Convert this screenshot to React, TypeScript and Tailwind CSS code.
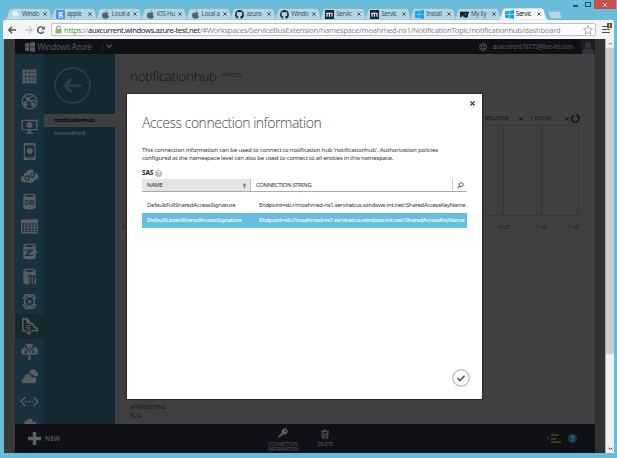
import React from "react";

type Kind = "page" | "google" | "apple" | "github" | "m" | "win" | "mtv";

const tabs: { kind: Kind; label: string; active?: boolean }[] = [
  { kind: "page", label: "Windo" },
  { kind: "google", label: "apple" },
  { kind: "apple", label: "Local a" },
  { kind: "apple", label: "iOS Hu" },
  { kind: "apple", label: "Local a" },
  { kind: "github", label: "azure-" },
  { kind: "github", label: "Windo" },
  { kind: "m", label: "Servic" },
  { kind: "m", label: "Servic" },
  { kind: "win", label: "Install" },
  { kind: "mtv", label: "My Ey" },
  { kind: "win", label: "Servic", active: true },
];

function Favicon({ kind }: { kind: Kind }) {
  if (kind === "google") {
    return (
      <div className="flex h-[9px] w-[9px] shrink-0 items-center justify-center rounded-[1px] bg-[#4b8df0] pb-[2px] font-['Liberation_Serif',serif] text-[9px] leading-none font-bold text-white">
        g
      </div>
    );
  }
  return (
    <svg viewBox="0 0 16 16" className="h-[9px] w-[9px] shrink-0">
      {kind === "page" && (
        <>
          <path d="M3 2h8l2 3v10H3z" fill="#e8f1ee" />
          <circle cx="5" cy="4" r="2.5" fill="#f2efb0" />
          <path d="M4 12q4-4 9-1v4H4z" fill="#cfdad6" />
        </>
      )}
      {kind === "apple" && (
        <path
          d="M10.800 0q0 2.800-2.800 3.300Q8 .8 10.800 0zM8 4.500q3.500-1.500 5.500 1-3.200 2.300.6 5.500-1.800 5-4.100 4.400-2-.8-4 0Q3 15.500 1.900 10.500 1.500 3.200 8 4.500z"
          fill="#55626a"
        />
      )}
      {kind === "github" && (
        <path
          d="M8 .2a8 8 0 0 0-2.500 15.500c.4.1.5-.2.5-.4v-1.500c-2.300.5-2.800-1-2.800-1-.4-1-.9-1.200-.9-1.200-.7-.5.1-.5.1-.5.800.1 1.200.8 1.200.8.7 1.300 1.900.9 2.400.7 0-.5.3-.9.500-1.100-1.800-.2-3.700-.9-3.700-4 0-.9.3-1.600.8-2.100 0-.2-.4-1 .1-2.200 0 0 .7-.2 2.200.8a7.500 7.500 0 0 1 4 0c1.500-1 2.200-.8 2.200-.8.5 1.200.1 2 .1 2.200.5.5.8 1.200.8 2.100 0 3.100-1.900 3.800-3.700 4 .3.3.6.8.6 1.500v2.300c0 .2.100.5.500.4A8 8 0 0 0 8 .2z"
          fill="#17202a"
        />
      )}
      {kind === "m" && (
        <>
          <rect width="16" height="16" fill="#142534" />
          <path d="M3.500 12V5M3.500 7q2-3 4.300-.5V12M7.800 7q2.500-3 4.700-.5V12" fill="none" stroke="#fff" strokeWidth="2" />
        </>
      )}
      {kind === "win" && (
        <path d="M0 2.300 6.800 1.300v6.200H0zM7.800 1.200 16 0v7.500H7.800zM0 8.500h6.800v6.200L0 13.700zM7.800 8.500H16V16l-8.200-1.200z" fill="#12a4e4" />
      )}
      {kind === "mtv" && (
        <>
          <path d="M0 3h9v10H6V8l-1.500 4L3 8v5H0zM8 3h8v3h-2v7h-3V6H8z" fill="#15181c" />
          <path d="m8 7 2.500 6L14 6" stroke="#15181c" strokeWidth="2" fill="none" />
        </>
      )}
    </svg>
  );
}

function Tab({ kind, label, active }: { kind: Kind; label: string; active?: boolean }) {
  return (
    <div className="relative flex h-[12px] w-[44.9px] shrink-0 items-center pl-[6px]">
      <svg viewBox="0 0 49 12" className="absolute top-0 left-0 h-[12px] w-[49px]">
        <path
          d="M0 12Q1.500 11 2.500 7L4 2Q4.600.4 6.500.4H42Q43.800.4 44.500 2L46.500 9Q47.300 11.500 49 12z"
          fill={active ? "#f5f7f8" : "#b4d6e3"}
          stroke={active ? "#c9dde5" : "#7fa9ba"}
          strokeWidth=".6"
        />
      </svg>
      <div className="relative flex items-center">
        <Favicon kind={kind} />
        <span className={"ml-[2px] w-[19px] text-[6.2px] leading-[10px] tracking-[-0.3px] whitespace-nowrap " + (active ? "text-[#111]" : "text-[#40525b]")}>
          {label}
        </span>
        <svg viewBox="0 0 6 6" className="ml-[2px] h-[4px] w-[4px]">
          <path d="m.5.5 5 5m0-5-5 5" stroke="#3e4b52" strokeWidth="1.400" />
        </svg>
      </div>
    </div>
  );
}

const C = "#595d5f";
const B = "#17323d";

const sideIcons: React.ReactNode[] = [
  <g fill={C}>
    {[0, 1, 2, 3].map((r) => [0, 1, 2, 3].map((c) => <rect key={`${r}-${c}`} x={2.600 + c * 3.800} y={2.600 + r * 3.800} width="3.300" height="3.300" />))}
  </g>,
  <g fill="none" stroke={C} strokeWidth="1.300">
    <circle cx="10" cy="10" r="7.800" />
    <path d="M4 5q6 1 11 11M14 4Q7 7 5 15M3 12q8-5 14-2" />
    <circle cx="8.500" cy="7.500" r="1.500" fill={C} />
    <circle cx="13.500" cy="13" r="1.500" fill={C} />
    <circle cx="6" cy="13.500" r="1.300" fill={C} />
  </g>,
  <g fill={C}>
    <path d="M1.500 3h17v11h-17zM3 4.500v8h14v-8z" fillRule="evenodd" />
    <path d="M8.500 14h3l.5 2.500h2v1H6v-1h2z" />
    <path d="m10 5 3 1.700v3.500L10 12l-3-1.800V6.700z" />
  </g>,
  <g>
    <rect x="4" y="1" width="12.500" height="18" rx="1.500" fill={C} />
    <rect x="5.300" y="3.500" width="10" height="12.500" fill={B} />
    <path d="m10.300 6 3 1.700v3.500l-3 1.800-3-1.800V7.700z" fill={C} />
    <rect x="8.500" y="17" width="3.500" height="1" fill={B} />
  </g>,
  <g>
    <path d="M5 16Q.5 16 1 12.500 1 10 4 9.500 3.500 6 7 6q1-3.500 5-3 3 .5 3.300 3.500 4 0 4 3.500 0 4-4.300 3.500-1 3.500-4 3.500-2.500 0-3-1.500-1 .7-3 .5z" fill={C} />
    <g fill="none" stroke={B} strokeWidth="1.200">
      <circle cx="7.500" cy="11.500" r="2.100" />
      <circle cx="13" cy="8.700" r="2.100" />
    </g>
  </g>,
  <g>
    <path d="M3.500 4Q3.500 1.500 10 1.500T16.500 4v12q0 2.500-6.500 2.500T3.500 16z" fill={C} />
    <ellipse cx="10" cy="4" rx="4.800" ry="1.200" fill={B} />
    <text x="10" y="14" fontSize="7" fontWeight="700" textAnchor="middle" fill={B} fontFamily="Liberation Sans, sans-serif">DB</text>
  </g>,
  <g>
    <rect x="1" y="2.500" width="18" height="15" fill={C} />
    <g fill={B}>
      {[0, 1, 2, 3].map((r) => [0, 1, 2, 3, 4].map((c) => <rect key={`${r}-${c}`} x={2 + c * 3.400} y={6.500 + r * 2.600} width="2.400" height="1.600" />))}
    </g>
  </g>,
  <g>
    <path d="M3.500 4Q3.500 1.500 10 1.500T16.500 4v12q0 2.500-6.500 2.500T3.500 16z" fill={C} />
    <ellipse cx="10" cy="4" rx="4.800" ry="1.200" fill={B} />
    <path d="M5 8.500h8l-7 5.500h8M7 11.500l5-2.500" fill="none" stroke={B} strokeWidth="1.300" />
    <path d="m15 8 4 2.700-4 2.500z" fill={C} />
  </g>,
  <g>
    <path d="M3.500 4Q3.500 1.500 10 1.500T16.500 4v12q0 2.500-6.500 2.500T3.500 16z" fill={C} />
    <ellipse cx="10" cy="4" rx="4.800" ry="1.200" fill={B} />
    <path d="M9 8.500h6l3 3V19H9z" fill={B} />
    <path d="M10.500 10v7.500M13 10v7.500M15.500 11.500h1v6h-1z" stroke={C} strokeWidth="1.100" />
  </g>,
  <g fill="none" stroke={C} strokeWidth="1.700">
    <circle cx="10" cy="10" r="5.200" />
    <path d="M3 7 6 3h8l3 4M3 13l3 4h8l3-4" />
    <path d="m8.700 7.500 4 2.500-4 2.500z" fill={C} stroke="none" />
  </g>,
  <g fill="none" stroke={C} strokeWidth="1.700">
    <path d="M7 14.500H3V2h4.500l3 3.500v2.500M7.500 2v4h3M12 14.500h6.200v-2.500q-3.200-.3-4.200-4-1-1.500-3.500-1.500" />
    <path d="M6 9h5M6 11.500h5" strokeWidth="1.200" />
    <path d="M9.500 12v6M7 15.800l2.500 2.500 2.500-2.500" strokeWidth="1.300" />
  </g>,
  <g>
    <path d="M5 13.500Q1 13.500 1 10q0-3 3-3.500 0-4.500 4-4.500 5-1.500 7 2.500 4 1 4 5 0 4.500-4.500 4z" fill={C} />
    <g stroke={B} fill={B} strokeWidth=".9">
      <path d="m10 8-4-3m4 3 4-3m-4 3v4m0-4H5m5 0h5" />
      <circle cx="6" cy="5" r="1" />
      <circle cx="14" cy="5" r="1" />
      <circle cx="6" cy="10.500" r="1" />
      <circle cx="14" cy="10.500" r="1" />
      <circle cx="10" cy="8" r="1.700" fill={C} />
    </g>
    <path d="M9.200 13h1.600v6H9.200z" fill={C} />
    <circle cx="10" cy="17.500" r="1.400" fill={C} />
  </g>,
  <g>
    <path d="M10 6Q11 2 14.500 2.500 17 2.500 17 5q2.500.5 2.300 3-.3 2.500-3.300 2z" fill={C} />
    <path d="M5 17.500Q1 17.500 1.300 14q.3-2.500 3-2.700Q4.500 7 8.500 7q3.500 0 4.200 3.500 4.800-.5 5 3.200.2 3.800-3.700 3.800z" fill={C} stroke={B} strokeWidth=".8" />
  </g>,
  <g fill="none" stroke={C} strokeWidth="1.500">
    <path d="m6 5-5 5 5 5M14 5l5 5-5 5" />
    <path d="M5.800 10h1.800m1.500 0h1.800m1.500 0h1.800" strokeWidth="1.800" />
  </g>,
  <path d="M5 4h3V2h5v3h4v6H4z" fill={C} />,
];

function Chevron({ className }: { className: string }) {
  return (
    <svg viewBox="0 0 8 6" className={className}>
      <path d="m1 1 3 3 3-3" fill="none" stroke="currentColor" strokeWidth="1.600" />
    </svg>
  );
}

function Toolbar() {
  return (
    <div className="mx-[3px] flex h-[19px] items-center rounded-t-[2px] bg-[#f4f5f5] pl-[5px]">
      <svg viewBox="0 0 10 10" className="h-[8px] w-[8px]">
        <path d="M10 5H1.500M5 1 1 5l4 4" fill="none" stroke="#4c5154" strokeWidth="1.700" />
      </svg>
      <svg viewBox="0 0 10 10" className="ml-[9px] h-[8px] w-[8px]">
        <path d="M0 5h8.500M5 1l4 4-4 4" fill="none" stroke="#c7cacb" strokeWidth="1.600" />
      </svg>
      <svg viewBox="0 0 10 10" className="ml-[4px] h-[8px] w-[8px]">
        <path d="M8.300 7A4 4 0 1 1 8 2.600" fill="none" stroke="#484d50" strokeWidth="1.700" />
        <path d="M9.800.3v4.200H5.500z" fill="#484d50" />
      </svg>
      <div className="ml-[6px] flex h-[12.500px] w-[545px] shrink-0 items-center rounded-[2px] border border-[#bfc3c5] bg-white pl-[3px]">
        <svg viewBox="0 0 8 10" className="h-[9px] w-[7px] shrink-0">
          <path d="M2 5V3q0-2 2-2t2 2v2" fill="none" stroke="#8b9a83" strokeWidth="1.200" />
          <rect x=".5" y="4.300" width="7" height="5.400" rx=".6" fill="#7fc15a" />
        </svg>
        <div className="ml-[2px] text-[7.600px] leading-[10px] tracking-[-0.265px] whitespace-nowrap text-[#8a8a8a]">
          <span className="text-[#3c9a3f]">https</span>://
          <span className="tracking-[-0.370px] text-[#1d1d1d]">auxcurrent.windows.azure-test.net</span>
          /#Workspaces/ServiceBusExtension/namespace/moahmed-ns1/NotificationTopic/notificationhub/dashboard
        </div>
        <svg viewBox="0 0 12 12" className="mr-[2px] ml-auto h-[10px] w-[10px] shrink-0">
          <path d="m6 .8 1.500 3.600 3.900.3-3 2.500.9 3.800L6 9l-3.300 2 .9-3.800-3-2.500 3.900-.3z" fill="#fff" stroke="#8e9295" strokeWidth=".9" />
        </svg>
      </div>
      <div className="relative ml-[6px] flex w-[8px] flex-col gap-[1.500px]">
        <div className="h-[1.500px] bg-[#4b4f52]" />
        <div className="h-[1.500px] bg-[#4b4f52]" />
        <div className="h-[1.500px] bg-[#4b4f52]" />
        <div className="absolute -top-[3px] left-[5px] flex h-[5px] w-[5px] items-center justify-center bg-[#70501d]">
          <div className="h-[3px] w-[1px] bg-[#e8d49c]" />
        </div>
      </div>
    </div>
  );
}

function Header() {
  return (
    <div className="flex h-[15px] shrink-0 items-center bg-[#101116] pl-[10px] text-[#50565b]">
      <svg viewBox="0 0 16 16" className="h-[10px] w-[10px]" fill="#555b60">
        <path d="M0 2.300 6.800 1.300v6.200H0zM7.800 1.200 16 0v7.500H7.800zM0 8.500h6.800v6.200L0 13.700zM7.800 8.500H16V16l-8.200-1.200z" />
      </svg>
      <span className="ml-[2.500px] w-[60px] text-[8.300px] leading-[15px] tracking-[-0.450px] whitespace-nowrap">Windows Azure</span>
      <div className="ml-[4px] h-[8px] w-px bg-[#222429]" />
      <Chevron className="ml-[2.500px] h-[5px] w-[8px]" />
      <svg viewBox="0 0 10 10" className="ml-auto h-[8px] w-[8px]" fill="none" stroke="#555a60" strokeWidth=".8">
        <circle cx="5" cy="5" r="4.500" />
        <ellipse cx="5" cy="5" rx="2" ry="4.500" />
        <path d="M.8 3.300h8.400M.8 6.700h8.400" />
      </svg>
      <span className="ml-[6px] w-[84px] text-[6.200px] tracking-[-0.320px] whitespace-nowrap">auxcurrent78775@live-int.com</span>
      <div className="ml-[4px] flex h-[15px] w-[14px] items-end justify-center bg-[#1b1d22]">
        <svg viewBox="0 0 12 13" className="h-[13px] w-[12px]" fill="#33363c">
          <circle cx="6" cy="4" r="3" />
          <path d="M.5 13V9.500Q1 7.500 4 7.500h4q3 0 3.500 2V13z" />
        </svg>
      </div>
    </div>
  );
}

function Dialog() {
  return (
    <div className="absolute top-[55px] left-[123px] flex h-[305px] w-[355px] flex-col bg-white px-[15px] text-[#333] shadow-[0_0_1px_1px_#2a2a2a]">
      <div className="-mr-[8px] flex h-[19px] items-center justify-end">
        <svg viewBox="0 0 6 6" className="h-[5px] w-[5px]">
          <path d="m.5.500 5 5m0-5-5 5" stroke="#222" strokeWidth="1.300" />
        </svg>
      </div>
      <h1 className="h-[20px] font-['Open_Sans','Noto_Sans',sans-serif] text-[14px] leading-[20px] font-light tracking-[-0.480px] whitespace-nowrap text-[#484848]">
        Access connection information
      </h1>
      <div className="mt-[13px] text-[6.100px] leading-[7.500px] whitespace-nowrap">
        <p className="tracking-[-0.175px]">This connection information can be used to connect to notification hub 'notificationhub'. Authorization policies</p>
        <p className="tracking-[-0.220px]">configured at the namespace level can also be used to connect to all entities in this namespace.</p>
      </div>
      <div className="mt-[7px] flex h-[10px] items-center">
        <span className="text-[6.500px] font-bold tracking-[-0.200px] text-[#222]">SAS</span>
        <span className="ml-[2px] flex h-[7px] w-[7px] items-center justify-center rounded-full bg-[#bababa] text-[6px] font-bold text-white">?</span>
      </div>
      <div className="mt-[1px] flex h-[13px] shrink-0 items-center border-b border-[#aaa] text-[5.900px] tracking-[-0.330px] whitespace-nowrap">
        <div className="flex h-[12px] w-[109px] items-center justify-between border-r border-[#c0c0c0] bg-[#e5e5e5] pr-[3px] pl-[5px]">
          <span>NAME</span>
          <svg viewBox="0 0 5 6" className="h-[5px] w-[5px]">
            <path d="M2.500 0 5 2.800H3.300V6H1.700V2.800H0z" fill="#777" />
          </svg>
        </div>
        <span className="ml-[5px]">CONNECTION STRING</span>
        <div className="ml-auto flex h-[12px] w-[15px] items-center justify-center border-l border-[#ccc]">
          <svg viewBox="0 0 8 8" className="h-[7px] w-[7px]" fill="none" stroke="#444">
            <circle cx="4.800" cy="3" r="2.300" />
            <path d="M3 4.700.8 7" strokeWidth="1.200" />
          </svg>
        </div>
      </div>
      <div className="mt-[6px] flex h-[15px] shrink-0 items-center overflow-hidden pl-[5px] text-[5.900px] whitespace-nowrap">
        <span className="w-[112px] shrink-0 tracking-[-0.190px]">DefaultFullSharedAccessSignature</span>
        <span className="tracking-[-0.265px]">Endpoint=sb://moahmed-ns1.servicebus.windows-int.net/;SharedAccessKeyName</span>
      </div>
      <div className="flex h-[15px] shrink-0 items-center overflow-hidden bg-[#65bfe3] pl-[5px] text-[5.900px] font-medium whitespace-nowrap text-white">
        <span className="w-[112px] shrink-0 tracking-[-0.260px]">DefaultListenSharedAccessSignature</span>
        <span className="tracking-[-0.335px]">Endpoint=sb://moahmed-ns1.servicebus.windows-int.net/;SharedAccessKeyName</span>
      </div>
      <div className="mt-auto mr-[-3px] mb-[12px] flex justify-end">
        <svg viewBox="0 0 18 18" className="h-[18px] w-[18px]">
          <circle cx="9" cy="9" r="8.200" fill="#fff" stroke="#a0a0a0" />
          <path d="m5.500 9 2.500 2.700 4.500-5" fill="none" stroke="#4b4b4b" strokeWidth="1.500" />
        </svg>
      </div>
    </div>
  );
}

export default function App() {
  return (
    <div className="flex h-[458px] w-[617px] flex-col overflow-hidden bg-[#69bddb] font-['Noto_Sans','Open_Sans',sans-serif]">
      <div className="flex h-[20px] shrink-0 justify-between">
        <div className="flex items-end pl-[5px]">
          {tabs.map((t, i) => (
            <Tab key={i} {...t} />
          ))}
          <svg viewBox="0 0 16 8" className="mb-[1px] ml-[3.500px] h-[8px] w-[16px]">
            <path d="M1.500.5h10q1 0 1.500 1l2 5q.3 1-.8 1H5q-1.200 0-1.700-1l-2-5Q1 .5 1.500.5z" fill="#b5d8e6" stroke="#86b5c7" strokeWidth=".6" />
          </svg>
        </div>
        <div className="flex items-start">
          <div className="mt-[5px] h-[1.500px] w-[5px] bg-[#28505f]" />
          <div className="mt-[2px] ml-[7px] h-[5px] w-[6px] border border-t-[1.500px] border-[#28505f]" />
          <div className="ml-[3px] flex h-[9px] w-[22px] items-center justify-center bg-[#c9504f]">
            <svg viewBox="0 0 6 6" className="h-[4px] w-[4px]">
              <path d="m.5.500 5 5m0-5-5 5" stroke="#fff" strokeWidth="1.300" />
            </svg>
          </div>
          <div className="w-[1px]" />
        </div>
      </div>
      <Toolbar />
      <div className="relative mr-[3px] ml-[4px] flex h-[414px] shrink-0">
        <div className="w-[11px] bg-[#393939]" />
        <div className="flex w-[580px] flex-col">
          <Header />
          <div className="flex h-[370px] shrink-0 overflow-hidden bg-[#404040]">
            <div className="flex w-[29px] flex-col bg-[#17323d] pt-[10px]">
              {sideIcons.map((icon, i) => (
                <div key={i} className={"flex h-[25px] shrink-0 items-center justify-center " + (i === 10 ? "bg-[#152930]" : "")}>
                  <svg viewBox="0 0 20 20" className="h-[19px] w-[19px]">{icon}</svg>
                </div>
              ))}
            </div>
            <div className="flex w-[71px] flex-col bg-[#16282f] text-[6px]">
              <svg viewBox="0 0 38 38" className="mt-[13px] ml-[10px] h-[37px] w-[37px]" fill="none" stroke="#284047">
                <circle cx="19" cy="19" r="17.800" strokeWidth="1.700" />
                <path d="M28 19H11M18 12l-7 7 7 7" strokeWidth="2.800" />
              </svg>
              <div className="mt-[10px] flex h-[13px] items-center bg-[#3d3f40] pl-[10px] font-bold tracking-[-0.400px] text-[#0a0a0a]">notificationhub</div>
              <div className="flex h-[13px] items-center pl-[10px] tracking-[-0.150px] text-[#56656a]">testandroid</div>
            </div>
            <div className="flex flex-1 flex-col">
              <div className="flex h-[44px] items-center pl-[15px]">
                <span className="font-['Open_Sans','Noto_Sans',sans-serif] text-[13.500px] font-light tracking-[-0.320px] whitespace-nowrap text-[#111]">notificationhub</span>
                <span className="ml-[5px] text-[4.700px] font-semibold text-[#29291c]">PREVIEW</span>
              </div>
              <div className="mt-[14px] flex h-[13px] items-center pl-[370px] text-[6px] tracking-[-0.250px] text-[#151515]">
                <span className="w-[33px]">RELATIVE</span>
                <Chevron className="h-[4px] w-[6px]" />
                <span className="ml-[6px] w-[34px] whitespace-nowrap">1 HOUR</span>
                <Chevron className="h-[4px] w-[6px]" />
                <svg viewBox="0 0 10 10" className="ml-[1px] h-[9px] w-[9px]" fill="none" stroke="#111">
                  <path d="M3 1.500A4 4 0 1 0 7.500 2" strokeWidth="1.600" />
                  <path d="M7 0v3h3" strokeWidth="1.300" />
                </svg>
              </div>
              <div className="ml-[15px] flex h-[91px] w-[449px] justify-end border border-[#383838]">
                <div className="w-[38px] border-l border-[#363636]" />
                <div className="w-[37px] border-l border-[#363636]" />
              </div>
              <div className="flex h-[22px] items-center pl-[7px] text-[4.500px] leading-[6px] text-[#171717]">
                <span className="mr-[363px] w-[13px]">10:50</span>
                <span className="w-[37px]">11:35</span>
                <span className="w-[32px]">11:40</span>
                <span>11:45</span>
              </div>
              <div className="mt-[165px] pl-[15px] text-[5.200px] leading-[8.500px] text-[#131313]">
                <div className="whitespace-nowrap">APNS SETTING</div>
                <div className="text-[6.500px] text-[#1b1b1b]">N/A</div>
              </div>
            </div>
          </div>
          <div className="flex h-[29px] shrink-0 bg-[#101116] text-[#56595c]">
            <div className="flex w-[240px] items-center pl-[13px]">
              <svg viewBox="0 0 12 12" className="h-[13px] w-[13px]">
                <path d="M6 0v12M0 6h12" stroke="#5f6265" strokeWidth="3.200" />
              </svg>
              <span className="ml-[4px] text-[6.500px] font-semibold">NEW</span>
            </div>
            <div className="flex w-[56px] flex-col items-center pt-[4px] text-center text-[4.700px] leading-[4.700px] tracking-[-0.180px]">
              <svg viewBox="0 0 10 10" className="h-[10px] w-[10px]">
                <path d="M6.500.5a3 3 0 0 0-2.700 4L.5 8.200V9.500h1.800l.2-1.400 1.300-.2.3-1.200.9-.7A3 3 0 1 0 6.500.5z" fill="#5d6164" />
                <circle cx="7.200" cy="2.800" r=".9" fill="#101116" />
              </svg>
              <div className="mt-[4px]">CONNECTION<br />INFORMATION</div>
            </div>
            <div className="flex w-[28px] flex-col items-center pt-[5px] text-[4.700px] leading-[5px] tracking-[-0.100px]">
              <svg viewBox="0 0 10 11" className="h-[10px] w-[8px]" fill="none" stroke="#5d6063">
                <path d="M0 2h10M3.500 1.800V.5h3v1.300M1.500 2.500v8h7v-8" strokeWidth="1.200" />
                <path d="M3.700 4v5M6.300 4v5" strokeWidth="1.200" />
              </svg>
              <span className="mt-[3px]">DELETE</span>
            </div>
            <div className="ml-auto flex items-center pr-[18px]">
              <span className="text-[6px] text-[#4a4d4d]">1</span>
              <div className="ml-[1px] flex w-[10px] flex-col gap-[1.500px]">
                <div className="h-[2px] w-[8px] bg-[#343e1a]" />
                <div className="h-[2px] w-[5px] bg-[#343e1a]" />
                <div className="h-[2px] w-[10px] bg-[#343e1a]" />
              </div>
              <div className="ml-[7px] flex h-[9px] w-[9px] items-center justify-center rounded-full bg-[#143e50] text-[6.500px] font-bold text-[#607780]">?</div>
            </div>
          </div>
        </div>
        <div className="w-[10px] bg-[#323232]" />
        <div className="flex flex-1 flex-col items-center justify-between border-l border-[#aaa] bg-[#f1f1f1] text-[#333]">
          <div className="flex w-full flex-col items-center bg-[#f1f1f1]">
            <div className="flex h-[9px] items-center">
              <Chevron className="h-[3px] w-[5px] rotate-180" />
            </div>
            <div className="h-[306px] w-[8px] bg-[#cdcdcd]" />
          </div>
          <Chevron className="mb-[2px] h-[4px] w-[5px]" />
        </div>
        <Dialog />
      </div>
    </div>
  );
}
